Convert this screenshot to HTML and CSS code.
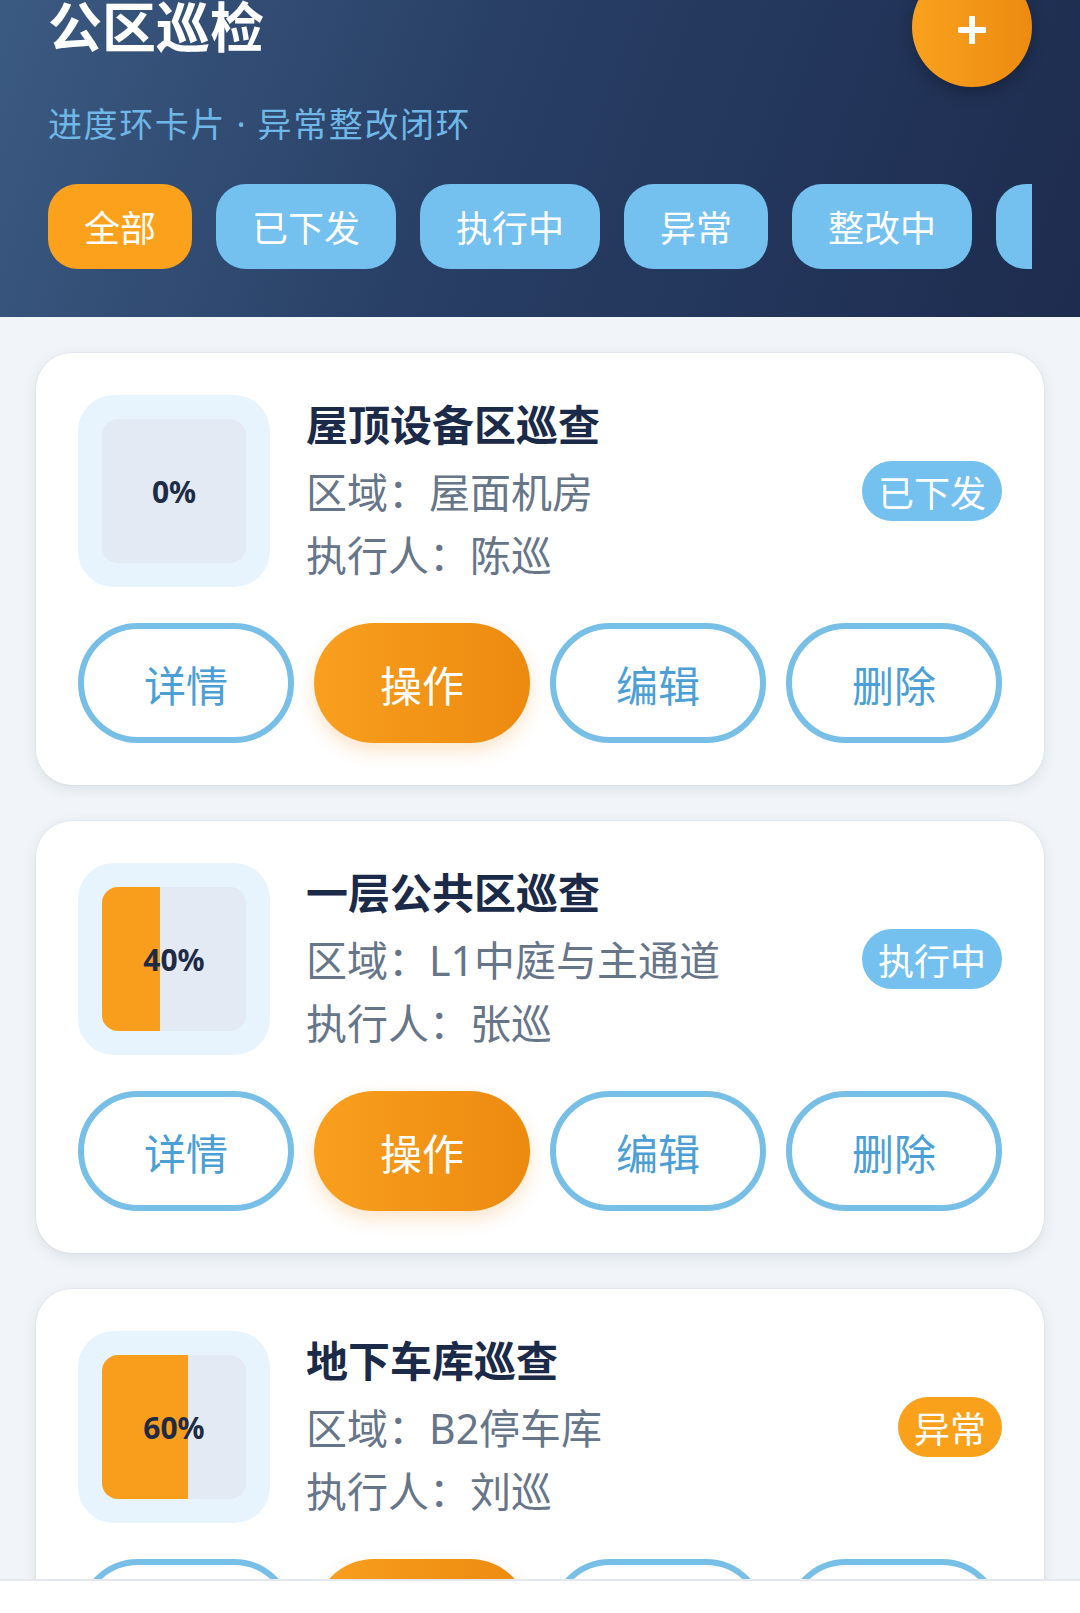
FILE: index.html
```html
<!DOCTYPE html>
<html lang="zh-CN">
<head>
  <meta charset="UTF-8"/>
  <meta name="viewport" content="width=device-width, initial-scale=1.0"/>
  <title>公区巡检</title>
  <link rel="stylesheet" href="styles.css">
</head>
<body>

  <!-- Header -->
  <header class="hero">
    <div class="hero-top">
      <h1>公区巡检</h1>
      <button class="add-btn" aria-label="新增">
        <svg width="28" height="28" viewBox="0 0 28 28">
          <rect x="11" y="0" width="6" height="28" rx="1" fill="#fff"/>
          <rect x="0" y="11" width="28" height="6" rx="1" fill="#fff"/>
        </svg>
      </button>
    </div>
    <p class="subtitle">进度环卡片 · 异常整改闭环</p>
    <div class="filters">
      <span class="chip active">全部</span>
      <span class="chip">已下发</span>
      <span class="chip">执行中</span>
      <span class="chip">异常</span>
      <span class="chip">整改中</span>
      <span class="chip">已完成</span>
    </div>
  </header>

  <!-- Task list -->
  <main class="list">

    <div class="card">
      <div class="card-main">
        <div class="progress">
          <div class="progress-inner">
            <div class="progress-fill" style="width:0%"></div>
            <span class="progress-text">0%</span>
          </div>
        </div>
        <div class="info">
          <h2>屋顶设备区巡查</h2>
          <p>区域：屋面机房</p>
          <p>执行人：陈巡</p>
        </div>
        <span class="badge">已下发</span>
      </div>
      <div class="actions">
        <button class="btn">详情</button>
        <button class="btn primary">操作</button>
        <button class="btn">编辑</button>
        <button class="btn">删除</button>
      </div>
    </div>

    <div class="card">
      <div class="card-main">
        <div class="progress">
          <div class="progress-inner">
            <div class="progress-fill" style="width:40%"></div>
            <span class="progress-text">40%</span>
          </div>
        </div>
        <div class="info">
          <h2>一层公共区巡查</h2>
          <p>区域：L1中庭与主通道</p>
          <p>执行人：张巡</p>
        </div>
        <span class="badge">执行中</span>
      </div>
      <div class="actions">
        <button class="btn">详情</button>
        <button class="btn primary">操作</button>
        <button class="btn">编辑</button>
        <button class="btn">删除</button>
      </div>
    </div>

    <div class="card">
      <div class="card-main">
        <div class="progress">
          <div class="progress-inner">
            <div class="progress-fill" style="width:60%"></div>
            <span class="progress-text">60%</span>
          </div>
        </div>
        <div class="info">
          <h2>地下车库巡查</h2>
          <p>区域：B2停车库</p>
          <p>执行人：刘巡</p>
        </div>
        <span class="badge warn">异常</span>
      </div>
      <div class="actions">
        <button class="btn">详情</button>
        <button class="btn primary">操作</button>
        <button class="btn">编辑</button>
        <button class="btn">删除</button>
      </div>
    </div>

  </main>

  <div class="bottom-bar"></div>

</body>
</html>
```

FILE: styles.css
```css
* {
  box-sizing: border-box;
  margin: 0; padding: 0;
}

body {
  font-family: "Noto Sans", "Noto Sans CJK SC", sans-serif;
  background: #f1f5f9;
  height: 100vh;
  display: flex;
  flex-direction: column;
  overflow: hidden;
}

/* Header */
.hero {
  background: linear-gradient(110deg, #3b5a82 0%, #283e64 45%, #1d2c4f 100%);
  padding: 0 48px 48px;
  flex-shrink: 0;
}

.hero-top {
  display: flex;
  justify-content: space-between;
  align-items: center;
  margin-top: -33px;
}

.hero h1 {
  color: #fff;
  font-size: 54px;
  font-weight: 700;
  line-height: 60px;
}

.add-btn {
  width: 120px;
  height: 120px;
  border: none;
  border-radius: 50%;
  background: linear-gradient(to right, #f9a11e, #ec8b10);
  box-shadow: 0 6px 16px rgba(0,0,0,0.25);
  display: flex;
  justify-content: center;
  align-items: center;
  padding-top: 6px;
}

.subtitle {
  margin-top: 13px;
  color: #6fb7e6;
  font-size: 34px;
  line-height: 48px;
  letter-spacing: 1.6px;
}

.filters {
  margin-top: 36px;
  display: flex;
  gap: 24px;
  overflow: hidden;
}

.chip {
  flex-shrink: 0;
  height: 85px;
  padding: 0 36px;
  border-radius: 30px;
  background: #74c0ee;
  color: #fff;
  font-size: 36px;
  display: flex;
  align-items: center;
}

.chip.active {
  background: #fba11c;
}

/* List */
.list {
  flex: 1;
  overflow-y: auto;
  scrollbar-width: none;
  padding: 36px;
  display: flex;
  flex-direction: column;
  gap: 36px;
}

.card {
  flex-shrink: 0;
  background: #fff;
  border-radius: 36px;
  padding: 42px;
  box-shadow: 0 4px 14px rgba(30,45,80,0.10), 0 0 0 1px rgba(30,45,80,0.04);
}

.card-main {
  display: flex;
  align-items: center;
}

.progress {
  width: 192px;
  height: 192px;
  flex-shrink: 0;
  background: #e8f4fd;
  border-radius: 36px;
  padding: 24px;
}

.progress-inner {
  height: 100%;
  background: #e3eaf3;
  border-radius: 16px;
  overflow: hidden;
  display: grid;
}

.progress-fill,
.progress-text {
  grid-area: 1 / 1;
}

.progress-fill {
  background: #f99d1c;
  height: 100%;
}

.progress-text {
  align-self: center;
  justify-self: center;
  font-size: 30px;
  font-weight: 700;
  color: #1e2b45;
}

.info {
  flex: 1;
  margin-left: 36px;
  padding-top: 4px;
}

.info h2 {
  font-size: 42px;
  font-weight: 700;
  line-height: 52px;
  color: #1b2a48;
  margin-bottom: 10px;
}

.info p {
  font-size: 41px;
  line-height: 63px;
  color: #677589;
}

.badge {
  height: 60px;
  padding: 0 16px;
  border-radius: 30px;
  background: #74c0ee;
  color: #fff;
  font-size: 36px;
  display: flex;
  align-items: center;
}

.badge.warn {
  background: #f9a11b;
}

.actions {
  margin-top: 36px;
  display: flex;
  gap: 20px;
}

.btn {
  flex: 1;
  height: 120px;
  border: 6px solid #78bfe8;
  border-radius: 60px;
  background: #fff;
  color: #4b9fd5;
  font-family: inherit;
  font-size: 42px;
}

.btn.primary {
  border-color: transparent;
  background: linear-gradient(to right, #f99f1e, #ec8a10) border-box;
  color: #fff;
  box-shadow: 0 8px 18px rgba(236,138,16,0.22);
}

.bottom-bar {
  height: 34px;
  flex-shrink: 0;
  background: #fff;
  border-top: 2px solid #e4e8ed;
}
```
